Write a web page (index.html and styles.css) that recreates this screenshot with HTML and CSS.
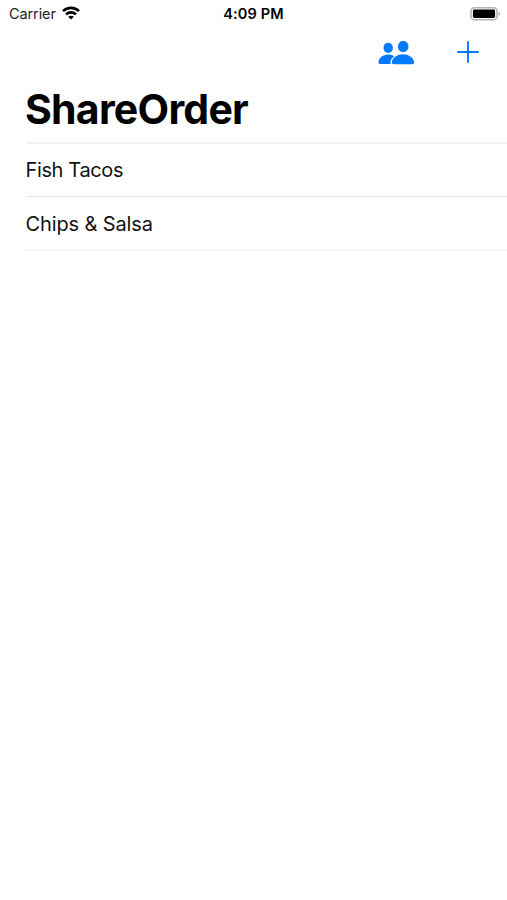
FILE: index.html
```html
<!DOCTYPE html>
<html lang="en">
<head>
<meta charset="utf-8">
<title>ShareOrder</title>
<link rel="stylesheet" href="styles.css">
</head>
<body>
<header class="status">
  <div class="carrier">
    <span class="carrier-name">Carrier</span>
    <svg class="wifi" width="18" height="14" viewBox="0 0 18 14">
      <g fill="none" stroke="#000" stroke-width="2.6">
        <path d="M1 5.2C5.4 .8 12.6 .8 17 5.2"/>
        <path d="M4 8.4C6.8 5.7 11.2 5.7 14 8.4"/>
      </g>
      <path d="M9 13.5L6.1 10.7C7.7 9.3 10.3 9.3 11.9 10.7Z"/>
    </svg>
  </div>
  <time class="time">4:09 PM</time>
  <svg class="battery" width="31" height="14" viewBox="0 0 31 14">
    <rect x="1" y=".8" width="26" height="12" rx="3.4" fill="#fff" stroke="#b4b4b4" stroke-width="1.6"/>
    <rect x="2.9" y="2.6" width="22.2" height="8.4" rx="1.4"/>
    <path d="M28.6 4.7C30.5 5.3 30.5 8.3 28.6 8.9Z" fill="#aaa"/>
  </svg>
</header>
<nav class="toolbar">
  <svg class="people" width="37" height="25" viewBox="0 0 37 25" fill="#007aff">
    <ellipse cx="10.2" cy="7.9" rx="4.7" ry="5.1"/>
    <path d="M12.9 24H2.2C.9 24 .5 23.3 .5 22.2C.5 18.8 4.3 14.6 10.2 14.6C12.7 14.6 14.6 15.2 16.1 16.2C13.7 18 12.4 20.2 12.4 22.3C12.4 23 12.5 23.5 12.9 24Z"/>
    <ellipse cx="25.2" cy="6.5" rx="5.3" ry="5.8"/>
    <path d="M15.9 24.2C14.4 24.2 13.8 23.6 13.8 22.5C13.8 19.1 18.1 14.3 25 14.3C31.8 14.3 36.1 19.1 36.1 22.5C36.1 23.6 35.5 24.2 34.1 24.2Z"/>
  </svg>
  <svg class="plus" width="22" height="22" viewBox="0 0 22 22" fill="none" stroke="#007aff" stroke-width="1.9" stroke-linecap="round">
    <path d="M11 1V21M1 11H21"/>
  </svg>
</nav>
<main class="content">
  <h1 class="title">ShareOrder</h1>
  <ul class="orders">
    <li class="order fish">Fish Tacos</li>
    <li class="order chips">Chips &amp; Salsa</li>
  </ul>
</main>
</body>
</html>
```
FILE: styles.css
```css
* { box-sizing: border-box; }
body {
  margin: 0;
  min-height: 900px;
  background: #fff;
  color: #000;
  font-family: Inter, "Liberation Sans", sans-serif;
}
.status {
  display: grid;
  grid-template-columns: 1fr auto 1fr;
  align-items: center;
  height: 27px;
  padding: 0 6px 0 9px;
}
.carrier { display: flex; align-items: center; gap: 6px; }
.carrier-name { font-size: 14.5px; letter-spacing: -0.1px; color: #222; }
.wifi { margin-top: -2px; }
.time { margin-right: 3px; font-size: 14.5px; font-weight: 600; letter-spacing: 0.15px; }
.battery { justify-self: end; }
.toolbar {
  display: flex;
  justify-content: flex-end;
  align-items: center;
  gap: 42px;
  height: 51px;
  padding-right: 28px;
}
.plus { margin-bottom: 2px; }
.content { padding-left: 25px; }
.title {
  margin: 0;
  height: 64px;
  line-height: 63px;
  font-size: 41px;
  font-weight: 700;
  letter-spacing: -0.75px;
}
.orders { margin: 0 0 0 0.5px; padding: 0; list-style: none; border-top: 2px solid #f2f2f2; }
.order {
  display: flex;
  align-items: center;
  font-size: 20px;
  color: #111;
}
.fish { height: 53px; border-bottom: 1px solid #e6e6e6; letter-spacing: -0.37px; }
.chips { height: 54px; padding-top: 2px; border-bottom: 2px solid #f4f4f4; letter-spacing: -0.12px; }
```
